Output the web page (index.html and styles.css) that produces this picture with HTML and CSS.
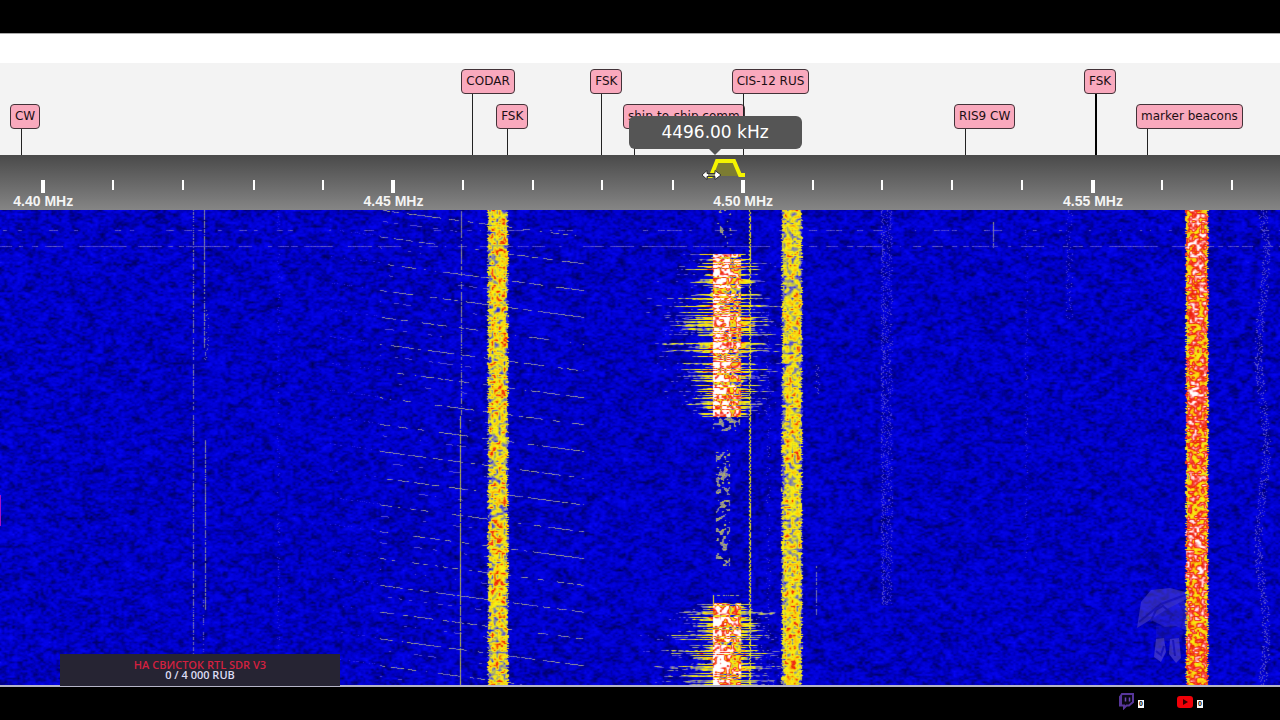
FILE: index.html
```html
<!DOCTYPE html>
<html lang="en">
<head>
<meta charset="utf-8">
<meta name="viewport" content="width=device-width, initial-scale=1">
<title>4496.00 kHz</title>
<link rel="stylesheet" href="styles.css">
</head>
<body>
<div class="stage">
  <header class="letterbox"></header>
  <div class="blank-bar"></div>

  <main class="receiver">
    <section class="stations" aria-label="Stations">
      <div class="station station-low" style="left:1.64%"><button class="tag" type="button">CW</button><i class="stem"></i></div>
      <div class="station" style="left:36.9%"><button class="tag" type="button">CODAR</button><i class="stem"></i></div>
      <div class="station station-low" style="left:39.62%"><button class="tag" type="button">FSK</button><i class="stem"></i></div>
      <div class="station" style="left:46.97%"><button class="tag" type="button">FSK</button><i class="stem"></i></div>
      <div class="station station-low" style="left:49.53%"><button class="tag" type="button">ship-to-ship comm</button><i class="stem"></i></div>
      <div class="station" style="left:58.02%"><button class="tag" type="button">CIS-12 RUS</button><i class="stem"></i></div>
      <div class="station station-low" style="left:75.4%"><button class="tag" type="button">RIS9 CW</button><i class="stem"></i></div>
      <div class="station" style="left:85.55%"><button class="tag" type="button">FSK</button><i class="stem stem-double"></i></div>
      <div class="station station-low" style="left:89.61%"><button class="tag" type="button">marker beacons</button><i class="stem"></i></div>
      <div class="tooltip" role="tooltip" style="left:55.9%">4496.00 kHz</div>
    </section>

    <section class="scale" aria-label="Frequency scale">
      <div class="mark major" style="left:3.38%"><i></i><span>4.40 MHz</span></div>
      <div class="mark" style="left:8.84%"><i></i></div>
      <div class="mark" style="left:14.31%"><i></i></div>
      <div class="mark" style="left:19.81%"><i></i></div>
      <div class="mark" style="left:25.27%"><i></i></div>
      <div class="mark major" style="left:30.74%"><i></i><span>4.45 MHz</span></div>
      <div class="mark" style="left:36.21%"><i></i></div>
      <div class="mark" style="left:41.66%"><i></i></div>
      <div class="mark" style="left:47.07%"><i></i></div>
      <div class="mark" style="left:52.54%"><i></i></div>
      <div class="mark major" style="left:58.06%"><i></i><span>4.50 MHz</span></div>
      <div class="mark" style="left:63.55%"><i></i></div>
      <div class="mark" style="left:68.93%"><i></i></div>
      <div class="mark" style="left:74.41%"><i></i></div>
      <div class="mark" style="left:79.88%"><i></i></div>
      <div class="mark major" style="left:85.39%"><i></i><span>4.55 MHz</span></div>
      <div class="mark" style="left:90.78%"><i></i></div>
      <div class="mark" style="left:96.25%"><i></i></div>
      <svg class="passband" style="left:54.69%" width="48" height="28" viewBox="0 0 48 28" aria-hidden="true">
        <path d="M12 21 L17 6 H34 L40 21Z" fill="#7c7c32"/>
        <path d="M8 21 H11 L17 6 H34 L40 20 H45" fill="none" stroke="#f4f400" stroke-width="4"/>
        <path d="M2 20 L7 15.500 V18.500 H15 V15.500 L21 20 L15 24.500 V21.500 H7 V24.500Z" fill="#fff" stroke="#333" stroke-width="1"/>
        <path d="M8 20 H15" stroke="#92936b" stroke-width="2"/>
      </svg>
    </section>

    <section class="waterfall" aria-label="Waterfall">
      <canvas id="spectrum" class="spectrum" width="1280" height="475"></canvas>
      <svg class="mascot" width="60" height="80" viewBox="0 0 60 80" aria-hidden="true">
        <g fill="#6c5cc8">
          <path d="M1 42 L5 16 L15 4 L34 2 L49 6 L51 13 L31 23 L14 34Z" opacity=".8"/>
          <path d="M12 30 L28 19 L47 12 L52 24 L51 45 L40 40 L29 41 L17 35Z" opacity=".55"/>
          <path d="M20 40 L40 38 L48 46 L44 56 L20 54Z" opacity=".25"/>
          <path d="M20 53 L28 52 L30 66 L25 76 L18 71Z"/>
          <path d="M34 53 L43 52 L45 72 L40 77 L33 68Z"/>
        </g>
        <path d="M3 36 L25 18 L49 9 M15 35 L20 24 L27 20 L36 28 L33 36 L24 34 M43 17 L49 28 L45 42 M20 65 L25 69 L28 60 M37 54 L39 70" fill="none" stroke="#352aa8" stroke-width="2"/>
      </svg>
      <aside class="goal">
        <p class="goal-title">НА СВИСТОК RTL SDR V3</p>
        <p class="goal-sum">0 / 4 000 RUB</p>
      </aside>
    </section>
  </main>

  <footer class="viewers">
    <div class="channel">
      <svg width="16" height="17" viewBox="0 0 16 17" role="img" aria-label="Twitch">
        <path d="M4 1 H15 V9 L11 12.500 H8.500 L6 15 V12.500 H2 V4Z" fill="#0a0712" stroke="#57369a" stroke-width="2"/>
        <path d="M1 4 L4 1 V13 H1Z" fill="#57369a"/>
        <path d="M7.500 4.500 V8.500 M11.500 4.500 V8.500" stroke="#6c48b4" stroke-width="1.500"/>
      </svg>
      <span class="count">0</span>
    </div>
    <div class="channel">
      <svg width="16" height="13" viewBox="0 0 16 13" role="img" aria-label="YouTube">
        <rect y="1" width="16" height="12" rx="3" fill="#f00008"/>
        <path d="M6 4 L11 7 L6 10Z" fill="#300"/>
      </svg>
      <span class="count">0</span>
    </div>
  </footer>
</div>
<script src="waterfall.js"></script>
</body>
</html>
```
FILE: styles.css
```css
* { box-sizing: border-box; }

body {
  margin: 0;
  background: #000;
  font-family: "DejaVu Sans", sans-serif;
}

.stage {
  display: flex;
  flex-direction: column;
  min-height: 100vh;
  overflow: hidden;
}

.letterbox {
  height: 34px;
  border-bottom: 1px solid #aaa;
}

.blank-bar {
  height: 29px;
  background: #fff;
}

.receiver {
  display: flex;
  flex-direction: column;
  border-bottom: 2px solid #b4b4c8;
}

.stations {
  position: relative;
  z-index: 1;
  height: 92px;
  background: #f3f3f3;
}

.station {
  position: absolute;
  top: 6px;
  bottom: 0;
  display: flex;
  flex-direction: column;
  align-items: flex-start;
}

.station-low { top: 41px; }

.tag {
  height: 25px;
  margin: 0 0 0 -11px;
  padding: 0 4px 2px;
  border: 1px solid #423238;
  border-radius: 4px;
  background: #f9a9bd;
  color: #1c0f14;
  font: 12px/20px "DejaVu Sans", sans-serif;
  white-space: nowrap;
}

.stem {
  flex: 1;
  width: 1px;
  background: #222;
}

.stem-double { width: 2px; background: #000; }

.tooltip {
  position: absolute;
  top: 53px;
  width: 173px;
  margin-left: -87px;
  border-radius: 6px;
  background: #555;
  color: #fff;
  font-size: 17px;
  line-height: 33px;
  text-align: center;
}

.tooltip::after {
  content: "";
  position: absolute;
  top: 100%;
  left: 50%;
  margin-left: -6px;
  border: 6px solid transparent;
  border-top-color: #555;
  border-bottom: 0;
}

.scale {
  position: relative;
  height: 55px;
  background: linear-gradient(#4a4a4a, #858585);
  overflow: hidden;
}

.mark {
  position: absolute;
  top: 25px;
  width: 80px;
  margin-left: -40px;
  display: flex;
  flex-direction: column;
  align-items: center;
  color: #f4f4f4;
  font: bold 14px/16px "Liberation Sans", Arial, sans-serif;
}

.mark i {
  width: 2px;
  height: 10px;
  background: #fff;
}

.major i { width: 4px; height: 13px; }

.passband {
  position: absolute;
  top: 0;
}

.waterfall { position: relative; }

.spectrum {
  display: block;
  width: 100%;
  height: auto;
  background: #0000b8;
}

.mascot {
  position: absolute;
  right: 84px;
  bottom: 19px;
  opacity: .5;
}

.goal {
  position: absolute;
  left: 60px;
  bottom: -1px;
  width: 280px;
  padding: 6px 0;
  background: #262433;
  font: 600 11px/10px "Open Sans", "Noto Sans", sans-serif;
  text-align: center;
}

.goal p { margin: 0; }
.goal-title { color: #d42040; }
.goal-sum { color: #dcdcf4; }

.viewers {
  flex: 1;
  display: flex;
  justify-content: flex-end;
  align-items: flex-start;
  gap: 33px;
  padding: 6px 77px 0 0;
}

.channel {
  display: flex;
  align-items: center;
  gap: 4px;
  height: 17px;
}

.count {
  width: 6px;
  margin-top: 4px;
  background: #fff;
  color: #000;
  font: bold 7px/8px "Liberation Sans", Arial, sans-serif;
  text-align: center;
}
```
FILE: waterfall.js
```js
(function () {
  var canvas = document.getElementById('spectrum');
  var ctx = canvas.getContext('2d');
  var W = canvas.width, H = canvas.height;
  var seed = 4496;

  function rnd() {
    seed = (seed + 0x6D2B79F5) | 0;
    var t = Math.imul(seed ^ (seed >>> 15), 1 | seed);
    t = (t + Math.imul(t ^ (t >>> 7), 61 | t)) ^ t;
    return ((t ^ (t >>> 14)) >>> 0) / 4294967296;
  }

  // Smooth noise in the range -1..1, sampled on a coarse grid
  function noiseField(cellX, cellY) {
    var cols = Math.ceil(W / cellX) + 2, rows = Math.ceil(H / cellY) + 2;
    var g = new Float32Array(cols * rows);
    for (var i = 0; i < g.length; i++) g[i] = rnd() * 2 - 1;
    return function (x, y) {
      var fx = x / cellX, fy = y / cellY;
      var ix = Math.floor(fx), iy = Math.floor(fy);
      fx -= ix; fy -= iy;
      var k = iy * cols + ix;
      var a = g[k] + (g[k + 1] - g[k]) * fx;
      var b = g[k + cols] + (g[k + cols + 1] - g[k + cols]) * fx;
      return a + (b - a) * fy;
    };
  }

  var fine = noiseField(2.6, 1.8), mid = noiseField(6, 4), speck = noiseField(2.4, 2.2);
  var streak = noiseField(9, 1), gaps = noiseField(5, 2);
  var v = new Float32Array(W * H);
  var x, y, d, i;

  function raise(px, py, level) {
    px = Math.round(px); py = Math.round(py);
    if (px < 0 || px >= W || py < 0 || py >= H) return;
    var k = py * W + px;
    if (v[k] < level) v[k] = level;
  }

  // Noise floor
  for (y = 0; y < H; y++)
    for (x = 0; x < W; x++)
      v[y * W + x] = 0.175 + fine(x, y) * 0.08 + mid(x, y) * 0.06 + (rnd() - 0.5) * 0.02;

  // Interference rows
  [[20, .35], [36, -.1]].forEach(function (r) {
    for (x = 0; x < W; x++) if (gaps(x, r[0]) > r[1]) raise(x, r[0], .33 + rnd() * .06);
  });

  // Ionospheric sounder sweeps
  for (i = -1; i < 18; i++) {
    for (x = 380; x < 584; x++) {
      y = 1 + i * 26.8 + (x - 390) * .132;
      if (y < 0 || y >= H - 1) continue;
      if (gaps(x, y) > -.1) raise(x, y, .36 + rnd() * .1);
      if (x < 500 && gaps(x, y) > .35) raise(x, y + 11, .36);
    }
    for (x = 330; x < 380; x++) if (rnd() < .2) raise(x, i * 26.8 + (x - 390) * .132, .32);
  }

  // Narrow carriers: x, top, bottom, density, level, jitter
  [
    [193, 0, 475, .7, .41, 1], [204, 0, 140, .8, .42, 1], [206, 100, 150, .5, .38, 5],
    [205, 230, 400, .8, .42, 1], [203, 390, 475, .4, .38, 1],
    [461, 0, 205, .8, .43, 0], [460, 205, 475, .97, .48, 0],
    [887, 0, 395, .98, .34, 11], [887, 0, 395, .98, .34, 9], [882, 0, 395, .7, .35, 3],
    [993, 12, 38, .8, .42, 1], [1069, 0, 110, .7, .34, 7],
    [816, 355, 405, .8, .41, 1], [817, 155, 185, .6, .36, 4],
    [1026, 20, 370, .35, .32, 3], [278, 0, 440, .25, .32, 2],
    [768, 100, 475, .3, .34, 4]
  ].forEach(function (c) {
    for (y = c[1]; y < c[2]; y++)
      if (rnd() < c[3]) raise(c[0] + (rnd() - .5) * c[5], y, c[4] + (rnd() - .5) * .06);
  });
  for (y = 0; y < H; y++)
    for (i = 0; i < 4; i++)
      if (rnd() < .45) raise(1258 + Math.sin(y / 30) * 4 + rnd() * 8, y, .34 + rnd() * .04);

  // Data carrier beside the voice channel
  for (y = 0; y < H; y++) {
    raise(749 + (y >> 1) % 2, y, .52 + rnd() * .08);
    if (rnd() < .5) raise(750, y, .52);
  }

  // Wide FSK signals
  function band(left, right, level, spread, hot) {
    for (var y = 0; y < H; y++) {
      var l = left + Math.round(rnd() * 2), r = right - Math.round(rnd() * 2);
      var warm = mid(left + 100, y / 5) * hot;
      for (var x = l; x <= r; x++) {
        var edge = (x - l < 3 || r - x < 2) ? -.08 : 0;
        v[y * W + x] = Math.min(1, level + speck(x, y) * spread + warm + (rnd() - .5) * .04 + edge);
      }
    }
  }
  band(487, 508, .585, .26, .05);
  band(781, 802, .57, .24, .04);
  band(1185, 1208, .78, .26, .1);

  // Voice transmissions with splatter on both sides
  function burst(top, bottom, peak) {
    for (var y = top; y < bottom; y++) {
      var env = .45 + .55 * Math.exp(-Math.pow((y - peak) / 50, 2));
      var hit = rnd();
      var len = (hit > .4 ? 20 + rnd() * 44 : 2 + rnd() * 5) * env;
      var power = hit > .4 ? .58 + rnd() * .16 : .45;
      for (var x = 640; x < 840; x++) {
        var inside = x >= 713 && x <= 740;
        d = x < 713 ? 713 - x : x - 740;
        var k = y * W + x;
        if (inside) {
          var core = x < 720 ? 1.04 : x < 730 ? .94 : .77;
          v[k] = Math.min(1, core + speck(x, y) * .38 - (hit < .2 ? .32 : 0));
        } else {
          var reach = x < 713 ? len : len * .8;
          var s = power * Math.exp(-d / reach) + speck(x, y) * .14 + streak(x, y) * .15;
          if (s > .33 && s > v[k]) v[k] = s;
        }
      }
    }
  }
  burst(44, 207, 115);
  burst(393, 475, 444);

  function sparse(top, bottom, left, right, density) {
    for (var y = top; y < bottom; y++)
      for (var x = left; x < right; x++)
        if (speck(x, y) > density) raise(x, y, .38 + rnd() * .11);
  }
  sparse(0, 34, 717, 732, .5);
  sparse(207, 221, 713, 740, .05);
  sparse(239, 356, 716, 730, .34);
  for (y = 385; y < 400; y++) raise(713, y, .55);
  for (x = 713; x < 740; x++) if (rnd() < .7) raise(x, 385, .45);

  var stops = [
    [0, 0, 0, 45], [.08, 0, 0, 120], [.18, 0, 0, 200], [.29, 5, 5, 245],
    [.35, 70, 60, 215], [.42, 135, 135, 165], [.49, 195, 195, 70], [.56, 248, 245, 15],
    [.69, 250, 190, 15], [.77, 235, 30, 5], [.86, 250, 75, 70], [.95, 255, 205, 205], [1, 255, 255, 255]
  ];
  var rgb = new Float32Array(W * H * 3), c;
  for (i = 0; i < v.length; i++) {
    var t = Math.max(0, Math.min(1, v[i])), s = 1;
    while (s < stops.length - 1 && t > stops[s][0]) s++;
    var a = stops[s - 1], b = stops[s], f = (t - a[0]) / (b[0] - a[0]);
    for (c = 0; c < 3; c++) rgb[i * 3 + c] = a[c + 1] + (b[c + 1] - a[c + 1]) * f;
  }

  // Blend each bin slightly with its neighbours
  var img = ctx.createImageData(W, H);
  for (y = 0; y < H; y++) {
    for (x = 0; x < W; x++) {
      i = y * W + x;
      var lf = x ? i - 1 : i, rt = x < W - 1 ? i + 1 : i;
      var up = y ? i - W : i, dn = y < H - 1 ? i + W : i;
      for (c = 0; c < 3; c++)
        img.data[i * 4 + c] = rgb[i * 3 + c] * .64 + (rgb[lf * 3 + c] + rgb[rt * 3 + c]) * .12 +
          (rgb[up * 3 + c] + rgb[dn * 3 + c]) * .06;
      img.data[i * 4 + 3] = 255;
    }
  }
  ctx.putImageData(img, 0, 0);
  ctx.fillStyle = '#a010c8';
  ctx.fillRect(0, 285, 1, 31);
})();
```
